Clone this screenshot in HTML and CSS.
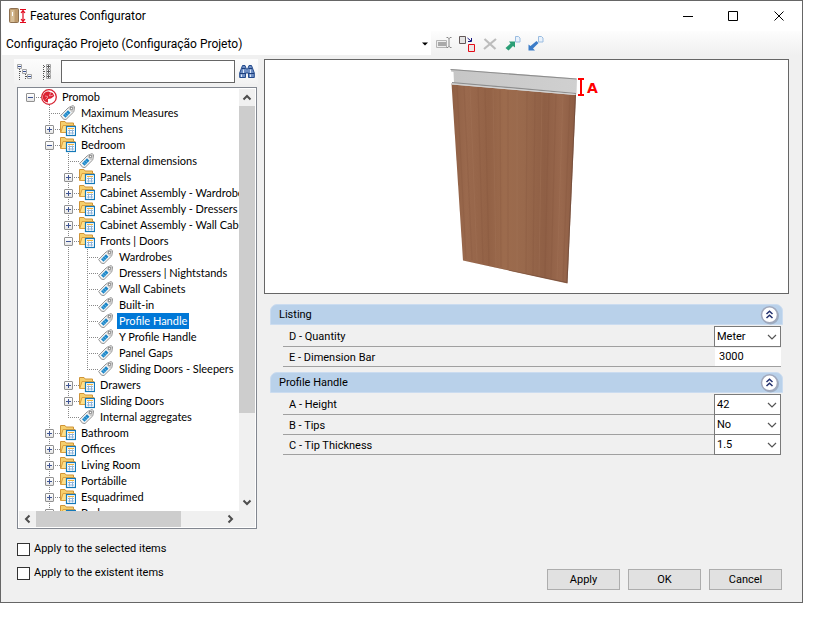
FILE: index.html
```html
<!DOCTYPE html>
<html lang="en">
<head>
<meta charset="utf-8">
<title>Features Configurator</title>
<link rel="stylesheet" href="styles.css">
</head>
<body>
<svg class="defs" aria-hidden="true">
  <symbol id="tag" viewBox="0 0 16 16">
    <path d="M.6 10.500 8.500 2.500 13 .6l1.600 1.200-.8 5L6 14.500 3.500 14.200z" fill="#f6f6f6" stroke="#929292"/>
    <path d="m9 2.500 4-1.500 1.200 1-.8 4.300-1.500 1.200-3.800-4z" fill="#c9c9c9"/>
    <path d="M3 10.300 8 5.300l2.500 2.400-5 5z" fill="#1c86c7"/>
    <path d="m4.500 9 2.500 2.500M6.200 7.400l2.500 2.500" stroke="#8ccdf0" stroke-width=".7"/>
    <rect x="10.500" y="2.500" width="2" height="2" fill="#fff" stroke="#8b8b8b" stroke-width=".8"/>
  </symbol>
  <symbol id="folder" viewBox="0 0 16 16">
    <path d="M.5 11.500V.5H5l1.200 1.500h7.300v3" fill="#f6cf6c" stroke="#cf9438"/>
    <path d="M.8 11.500 3 4.500h12v7z" fill="#ffe08a" stroke="#dba03f"/>
    <rect x="6.500" y="5.500" width="9" height="9" fill="#fff" stroke="#1579b8" stroke-width="1.200"/>
    <path d="M8 7.500h6" stroke="#f0b43c"/>
    <path d="M8 9.500h6M8 12h6M9.500 8.500v5M12.500 8.500v5" stroke="#8fb4da"/>
  </symbol>
  <symbol id="chev" viewBox="0 0 10 6"><path d="m1 1 4 4 4-4" fill="none" stroke="#555" stroke-width="1.200"/></symbol>
  <symbol id="arrow" viewBox="0 0 10 8"><path d="m1.500 6 3.500-3.500L8.500 6" fill="none" stroke="#4d4d4d" stroke-width="2"/></symbol>
  <symbol id="collapse" viewBox="0 0 20 20">
    <circle cx="10.500" cy="11" r="8.500" fill="#8a96a8" opacity=".6"/>
    <circle cx="9.500" cy="9.800" r="8" fill="#fff" stroke="#a0a8bc" stroke-width="1.500"/>
    <path d="m6.500 9 3-2.800 3 2.800M6.500 13l3-2.800 3 2.800" fill="none" stroke="#22306e" stroke-width="1.500"/>
  </symbol>
</svg>
<main class="window">
  <header class="titlebar">
    <svg class="app-icon" viewBox="0 0 18 17" aria-hidden="true">
      <rect x=".5" y=".5" width="9" height="14" rx="1" fill="#bd9a6c" stroke="#8d7050"/>
      <path d="M1.500 2h4v12h-4z" fill="#d6bd96"/><path d="M3.500 4v4" stroke="#fff"/>
      <path d="M11 1.500h6M11 14.500h6M14 3v10M12 5l2-2.500L16 5M12 11l2 2.500 2-2.500" fill="none" stroke="#e1061b" stroke-width="1.200"/>
    </svg>
    <h1>Features Configurator</h1>
    <button class="win-btn" aria-label="Minimize"><svg viewBox="0 0 11 11"><path d="M1 5.500h10" stroke="#000"/></svg></button>
    <button class="win-btn" aria-label="Maximize"><svg viewBox="0 0 11 11"><path d="M.5.5h9v9h-9z" fill="none" stroke="#000"/></svg></button>
    <button class="win-btn" aria-label="Close"><svg viewBox="0 0 11 11"><path d="m.5.500 9 9M9.500.5l-9 9" stroke="#000"/></svg></button>
  </header>
  <div class="toolbar">
    <div class="config">
      <select aria-label="Configuration"><option>Configuração Projeto (Configuração Projeto)</option></select>
      <svg class="config-arrow" viewBox="0 0 6 4"><path d="M0 .5h6l-3 3z"/></svg>
    </div>
    <button class="tool" aria-label="Rename"><svg viewBox="0 0 18 18"><path d="M.5 6.500h10v7H.5z" fill="#eee" stroke="#b4b4b4"/><path d="M2 8h8v4H2z" fill="#aaa"/><path d="M10.500 3.500h1.500l1 1 1-1h1.500M13 4v9M10.500 13.500h1.500l1-1 1 1h1.500" fill="none" stroke="#888"/></svg></button>
    <button class="tool" aria-label="Replace"><svg viewBox="0 0 18 18"><path d="M.5 2.500h6v7h-6z" fill="#e4e4e4" stroke="#635858"/><path d="m8.500 4 3.500 3M12.500 4v3.500H9" fill="none" stroke="#15157e"/><path d="M9.500 10.500h6v7h-6z" fill="#eee6e6" stroke="#e30b17"/></svg></button>
    <button class="tool" aria-label="Delete"><svg viewBox="0 0 18 18"><path d="m2.500 5 11 10M14 5 2 15" stroke="#bcbcbc" stroke-width="2.200"/></svg></button>
    <button class="tool" aria-label="Export"><svg viewBox="0 0 18 18"><path d="M10.500 2.500h3l1.500 1.500v4h-4.500z" fill="#e9f2fc" stroke="#9abce0"/><path d="M.5 14 5.500 9.500 4 7.500h6v6l-2-1.500-4.500 4.500z" fill="#2a9e75"/></svg></button>
    <button class="tool" aria-label="Import"><svg viewBox="0 0 18 18"><path d="M10.500 2.500h3l1.500 1.500v4h-4.500z" fill="#e9f2fc" stroke="#9abce0"/><path d="M.5 16.500v-6L2.500 12l6-5 2 2L5 14.500 7 16.500z" fill="#3b7cc8"/></svg></button>
  </div>
  <div class="content">
    <section class="side">
      <div class="search">
        <button class="tree-btn" aria-label="Collapse tree"><svg viewBox="0 0 16 16"><path d="M2.500 5v11M3 7.500h3M8.500 10v6M9 12.500h2" stroke="#555" stroke-dasharray="1 1"/><path d="M.5.5h4v4h-4zM5.500 5.500h4v4h-4zM10.500 10.500h4v4h-4z" fill="#f4f6fb" stroke="#a5a5a5"/><path d="M1 2.500h3M6 7.500h3M11 12.500h3" stroke="#385090"/></svg></button>
        <button class="tree-btn" aria-label="Expand tree"><svg viewBox="0 0 16 16"><path d="M4.500 1v15M5 2.500h3M5 7.500h3M5 12.500h3" stroke="#555" stroke-dasharray="1 1"/><path d="M7.500.5h4v4h-4zM7.500 5.500h4v4h-4zM7.500 10.500h4v4h-4z" fill="#f4f6fb" stroke="#a5a5a5"/><path d="M8 2.500h3M8 7.500h3M8 12.500h3M9.500 1v3M9.500 6v3M9.500 11v3" stroke="#555"/></svg></button>
        <input type="text" aria-label="Search features">
        <button class="find" aria-label="Find"><svg viewBox="0 0 16 16"><path d="M3.500 1.500h2.500l1.300 3.500h1.400L10 1.500h2.500L15.300 9v4.500H9.500V9h-3v4.500H.7V9z" fill="#6f8fc4" stroke="#234a8c"/><path d="M1 9.500h5.500M9.500 9.500H15M3 4.500h3.500M9.500 4.500H13" stroke="#1c3f7c"/><path d="M2.500 10.500v2.500M11.500 10.500v2.500M4.500 5.500v3.500M11.500 5.500v3.500" stroke="#dce8fa"/></svg></button>
      </div>
      <div class="tree-frame">
        <div class="tree-view">
          <ul class="tree">
            <li><div class="row"><button class="toggle" aria-label="Collapse"></button><svg class="icon" viewBox="0 0 16 16"><circle cx="8" cy="8" r="7.300" fill="#fff" stroke="#d6202f" stroke-width="1.300"/><path d="M7.500 2.500A5.500 5.500 0 0 0 7 13.500V10l3-.5 3.300-2.500-1.500-3z" fill="#dc2233"/><path d="m4 7 3 .5M4.500 10.500 7 8M9.500 3.500 8.500 7l3.500-.8" stroke="#fff" stroke-width=".5" fill="none"/></svg><span>Promob</span></div>
              <ul>
                <li><div class="row leaf"><svg class="icon"><use href="#tag"/></svg><span>Maximum Measures</span></div></li>
                <li><div class="row"><button class="toggle plus" aria-label="Expand"></button><svg class="icon"><use href="#folder"/></svg><span>Kitchens</span></div></li>
                <li><div class="row"><button class="toggle" aria-label="Collapse"></button><svg class="icon"><use href="#folder"/></svg><span>Bedroom</span></div>
                  <ul>
                    <li><div class="row leaf"><svg class="icon"><use href="#tag"/></svg><span>External dimensions</span></div></li>
                    <li><div class="row"><button class="toggle plus" aria-label="Expand"></button><svg class="icon"><use href="#folder"/></svg><span>Panels</span></div></li>
                    <li><div class="row"><button class="toggle plus" aria-label="Expand"></button><svg class="icon"><use href="#folder"/></svg><span>Cabinet Assembly - Wardrobe</span></div></li>
                    <li><div class="row"><button class="toggle plus" aria-label="Expand"></button><svg class="icon"><use href="#folder"/></svg><span>Cabinet Assembly - Dressers |</span></div></li>
                    <li><div class="row"><button class="toggle plus" aria-label="Expand"></button><svg class="icon"><use href="#folder"/></svg><span>Cabinet Assembly - Wall Cabin</span></div></li>
                    <li><div class="row"><button class="toggle" aria-label="Collapse"></button><svg class="icon"><use href="#folder"/></svg><span>Fronts | Doors</span></div>
                      <ul>
                        <li><div class="row leaf"><svg class="icon"><use href="#tag"/></svg><span>Wardrobes</span></div></li>
                        <li><div class="row leaf"><svg class="icon"><use href="#tag"/></svg><span>Dressers | Nightstands</span></div></li>
                        <li><div class="row leaf"><svg class="icon"><use href="#tag"/></svg><span>Wall Cabinets</span></div></li>
                        <li><div class="row leaf"><svg class="icon"><use href="#tag"/></svg><span>Built-in</span></div></li>
                        <li><div class="row leaf"><svg class="icon"><use href="#tag"/></svg><span class="selected">Profile Handle</span></div></li>
                        <li><div class="row leaf"><svg class="icon"><use href="#tag"/></svg><span>Y Profile Handle</span></div></li>
                        <li><div class="row leaf"><svg class="icon"><use href="#tag"/></svg><span>Panel Gaps</span></div></li>
                        <li><div class="row leaf"><svg class="icon"><use href="#tag"/></svg><span>Sliding Doors - Sleepers</span></div></li>
                      </ul>
                    </li>
                    <li><div class="row"><button class="toggle plus" aria-label="Expand"></button><svg class="icon"><use href="#folder"/></svg><span>Drawers</span></div></li>
                    <li><div class="row"><button class="toggle plus" aria-label="Expand"></button><svg class="icon"><use href="#folder"/></svg><span>Sliding Doors</span></div></li>
                    <li><div class="row leaf"><svg class="icon"><use href="#tag"/></svg><span>Internal aggregates</span></div></li>
                  </ul>
                </li>
                <li><div class="row"><button class="toggle plus" aria-label="Expand"></button><svg class="icon"><use href="#folder"/></svg><span>Bathroom</span></div></li>
                <li><div class="row"><button class="toggle plus" aria-label="Expand"></button><svg class="icon"><use href="#folder"/></svg><span>Offices</span></div></li>
                <li><div class="row"><button class="toggle plus" aria-label="Expand"></button><svg class="icon"><use href="#folder"/></svg><span>Living Room</span></div></li>
                <li><div class="row"><button class="toggle plus" aria-label="Expand"></button><svg class="icon"><use href="#folder"/></svg><span>Portábille</span></div></li>
                <li><div class="row"><button class="toggle plus" aria-label="Expand"></button><svg class="icon"><use href="#folder"/></svg><span>Esquadrimed</span></div></li>
                <li><div class="row"><button class="toggle plus" aria-label="Expand"></button><svg class="icon"><use href="#folder"/></svg><span>Bedroom</span></div></li>
              </ul>
            </li>
          </ul>
        </div>
        <div class="vbar"><svg class="sb up"><use href="#arrow"/></svg><div class="track"><div class="thumb"></div></div><svg class="sb down"><use href="#arrow"/></svg></div>
        <div class="hbar"><svg class="sb left"><use href="#arrow"/></svg><div class="track"><div class="thumb"></div></div><svg class="sb right"><use href="#arrow"/></svg></div>
      </div>
    </section>
    <section class="detail">
      <div class="preview">
        <svg viewBox="447 60 160 233" role="img" aria-label="Door with profile handle">
          <defs>
            <linearGradient id="wood" x1="0" x2="1">
              <stop offset="0" stop-color="#8f5f44"/><stop offset=".12" stop-color="#9a694d"/><stop offset=".3" stop-color="#936246"/><stop offset=".42" stop-color="#9c6b4d"/><stop offset=".58" stop-color="#99694c"/><stop offset=".75" stop-color="#8f5f45"/><stop offset=".88" stop-color="#99684d"/><stop offset="1" stop-color="#8c5c43"/>
            </linearGradient>
            <linearGradient id="metal" x2="1"><stop stop-color="#c6c6c6"/><stop offset="1" stop-color="#d0d0d0"/></linearGradient>
          </defs>
          <path d="m451.500 83.500 124.500 10.500-8.500 189.500-104.500-23z" fill="url(#wood)"/>
          <path d="m457 85 9 174M464 86l8 174M478 87l5 176M485 88l4 177M500 90l1 177M508 90v179M527 92l-1 181M535 92l-2 183M549 93l-4 184M556 93l-5 185M570 94l-7 187" stroke="#7e4f38" stroke-width="1.200" opacity=".2"/>
          <path d="m470 86 7 175M493 89l3 178M517 91v180M542 92l-3 184M563 94l-6 185" stroke="#a5765a" opacity=".35"/>
          <path d="M463 260.500l104.500 22.500L576 95l-1-.1-8.500 187z" fill="#6c4939" opacity=".7"/>
          <path d="m451 69 126 9.500-.5 15.500-1.500 1-123.500-10.500v-1.500h2.500l-.5-11-2.500-.5z" fill="url(#metal)"/>
          <path d="m450.500 69.500 126 9.500M452 82.500l124 11" stroke="#8d8d8d" stroke-width="1.200"/>
          <path d="m452 84 123 10.500" stroke="#d4d4d4"/>
          <path d="M578 79h6M578 95h6M581 79v16" stroke="#f00" stroke-width="2"/>
          <text x="587" y="92.500" class="mark">A</text>
        </svg>
      </div>
      <div class="groups">
        <section class="group">
          <h2>Listing<button class="fold" aria-label="Collapse Listing"><svg><use href="#collapse"/></svg></button></h2>
          <div class="field"><label for="qty">D - Quantity</label><div class="combo"><select id="qty"><option>Meter</option></select><svg><use href="#chev"/></svg></div></div>
          <div class="field"><label for="bar">E - Dimension Bar</label><input id="bar" type="text" value="3000"></div>
        </section>
        <section class="group">
          <h2>Profile Handle<button class="fold" aria-label="Collapse Profile Handle"><svg><use href="#collapse"/></svg></button></h2>
          <div class="field"><label for="height">A - Height</label><div class="combo"><select id="height"><option>42</option></select><svg><use href="#chev"/></svg></div></div>
          <div class="field"><label for="tips">B - Tips</label><div class="combo"><select id="tips"><option>No</option></select><svg><use href="#chev"/></svg></div></div>
          <div class="field"><label for="thick">C - Tip Thickness</label><div class="combo"><select id="thick"><option>1.5</option></select><svg><use href="#chev"/></svg></div></div>
        </section>
      </div>
    </section>
  </div>
  <footer>
    <div class="checks">
      <label><input type="checkbox">Apply to the selected items</label>
      <label><input type="checkbox">Apply to the existent items</label>
    </div>
    <div class="actions"><button>Apply</button><button>OK</button><button>Cancel</button></div>
  </footer>
</main>
</body>
</html>
```
FILE: styles.css
```css
* { box-sizing: border-box; }
body {
  margin: 0;
  padding: 0 17px 16px 0;
  height: 100vh;
  background: #fff;
  color: #000;
  font: 11px/16px Roboto, "Liberation Sans", sans-serif;
}
button, input, select { margin: 0; padding: 0; border: 0; border-radius: 0; background: none; color: inherit; font: inherit; }
svg { display: block; }
ul { margin: 0; padding: 0; list-style: none; }
.defs { position: absolute; width: 0; height: 0; }
.window { display: flex; flex-direction: column; height: 100%; border: 1px solid #666; background: #f0f0f0; }

.titlebar { display: flex; align-items: center; height: 30px; padding-left: 8px; background: #fff; }
.app-icon { width: 18px; height: 17px; }
h1 { flex: 1; margin: 0 0 0 3px; font-size: 12px; font-weight: 400; }
.win-btn { display: grid; place-items: center; width: 46px; height: 30px; }
.win-btn svg { width: 11px; height: 11px; }

.toolbar { display: flex; height: 24px; padding-left: 1px; background: linear-gradient(#fdfdfd, #f0f0f0); }
.config { position: relative; width: 429px; background: #fff; }
.config select { width: 100%; height: 25px; padding-left: 4px; appearance: none; font-size: 12px; }
.config-arrow { position: absolute; right: 3px; top: 11px; width: 6px; height: 4px; pointer-events: none; }
.tool { width: 18px; margin: 0 0 0 5px; }
.tool svg { width: 18px; height: 18px; }

.content { flex: 1; min-height: 0; display: flex; gap: 6px; padding: 4px 13px 0; }
.side { flex: 0 0 244px; display: flex; flex-direction: column; gap: 3px; }
.search { display: flex; align-items: center; height: 25px; padding-left: 3px; background: linear-gradient(#fcfcfc, #f2f2f2); }
.tree-btn { width: 22px; }
.tree-btn svg, .find svg { width: 16px; height: 16px; }
.search input { flex: 1; min-width: 0; height: 23px; border: 1px solid #666; background: #fff; padding: 0 4px; }
.find { width: 23px; padding-left: 4px; }

.tree-frame { flex: 1; min-height: 0; display: grid; grid-template: minmax(0, 1fr) 16px / minmax(0, 1fr) 16px; margin: 0 1px 0 3px; padding: 1px; border: 1px solid #828790; background: #fff; }
.tree-view { overflow: hidden; padding-left: 3px; font-family: Lato, "Liberation Sans", sans-serif; }
.tree ul { padding-left: 19px; }
.tree ul > li { background: repeating-linear-gradient(#888 0 1px, transparent 1px 2px) 8px 0 / 1px 100% no-repeat; }
.tree ul > li:last-child { background-size: 1px 8px; }
.row { display: flex; align-items: center; height: 16px; white-space: nowrap; background: repeating-linear-gradient(90deg, #888 0 1px, transparent 1px 2px) 8px 8px / 11px 1px no-repeat; }
.toggle { flex: none; width: 9px; height: 9px; margin: 0 6px 0 4px; border: 1px solid #919191; border-radius: 1px; background: linear-gradient(#3f5593, #3f5593) center / 5px 1px no-repeat, linear-gradient(#fff, #e6e6e6); }
.plus { background: linear-gradient(#3f5593, #3f5593) center / 5px 1px no-repeat, linear-gradient(#3f5593, #3f5593) center / 1px 5px no-repeat, linear-gradient(#fff, #e6e6e6); }
.leaf { padding-left: 19px; }
.icon { flex: none; width: 16px; height: 16px; margin-right: 3px; }
.row span { padding: 0 2px; }
.row .selected { background: #0078d7; color: #fff; }

.vbar, .hbar { display: flex; background: #f0f0f0; }
.vbar { flex-direction: column; }
.hbar { grid-column: 1 / 3; padding-right: 16px; }
.track { flex: 1; }
.thumb { background: #cdcdcd; }
.vbar .thumb { height: 79%; }
.hbar .thumb { width: 78%; height: 100%; }
.sb { flex: none; width: 16px; height: 17px; padding: 4px 3px; }
.hbar .sb { width: 17px; height: 16px; padding: 4px 3px; }
.down { transform: rotate(180deg); }
.left { transform: rotate(-90deg); }
.right { transform: rotate(90deg); }

.detail { flex: 1; min-width: 0; }
.preview { display: flex; justify-content: center; border: 1px solid #666; background: #fff; }
.preview svg { width: 160px; height: 233px; }
.mark { fill: #f00; font: bold 14px "DejaVu Sans", sans-serif; }
.groups { display: flex; flex-direction: column; gap: 5px; padding: 10px 6px 0; }
h2 { display: flex; align-items: center; justify-content: space-between; height: 21px; margin: 0; padding: 0 2px 0 8px; border: 1px solid #cbdcf0; border-radius: 7px 7px 0 0; background: #b9d1ea; font-size: 11px; font-weight: 400; }
.fold svg { width: 20px; height: 20px; }
.field { display: flex; align-items: center; height: 20px; margin: 0 2px 0 13px; border-bottom: 1px solid #a0a0a0; }
h2 + .field { height: 22px; padding-top: 1px; }
.field label { flex: 1; padding: 2px 0 0 6px; }
.combo { position: relative; align-self: flex-end; width: 67px; height: 20px; }
.combo select { display: block; width: 100%; height: 21px; padding-left: 2px; appearance: none; border: 1px solid #7a7a7a; background: #fff; }
.combo svg { position: absolute; right: 4px; top: 8px; width: 10px; height: 6px; pointer-events: none; }
.field input { width: 66px; height: 18px; padding-left: 4px; background: #fff; }

footer { display: flex; justify-content: space-between; align-items: flex-end; padding: 12px 20px 12px 16px; }
.checks { display: flex; flex-direction: column; gap: 8px; padding-bottom: 9px; }
.checks label { display: flex; align-items: center; gap: 4px; }
.checks input { appearance: none; width: 13px; height: 13px; border: 1px solid #333; background: #fff; }
.checks input:checked { background: #0078d7; }
.actions { display: flex; gap: 8px; }
.actions button { width: 73px; height: 21px; border: 1px solid #adadad; background: #e1e1e1; }
```
